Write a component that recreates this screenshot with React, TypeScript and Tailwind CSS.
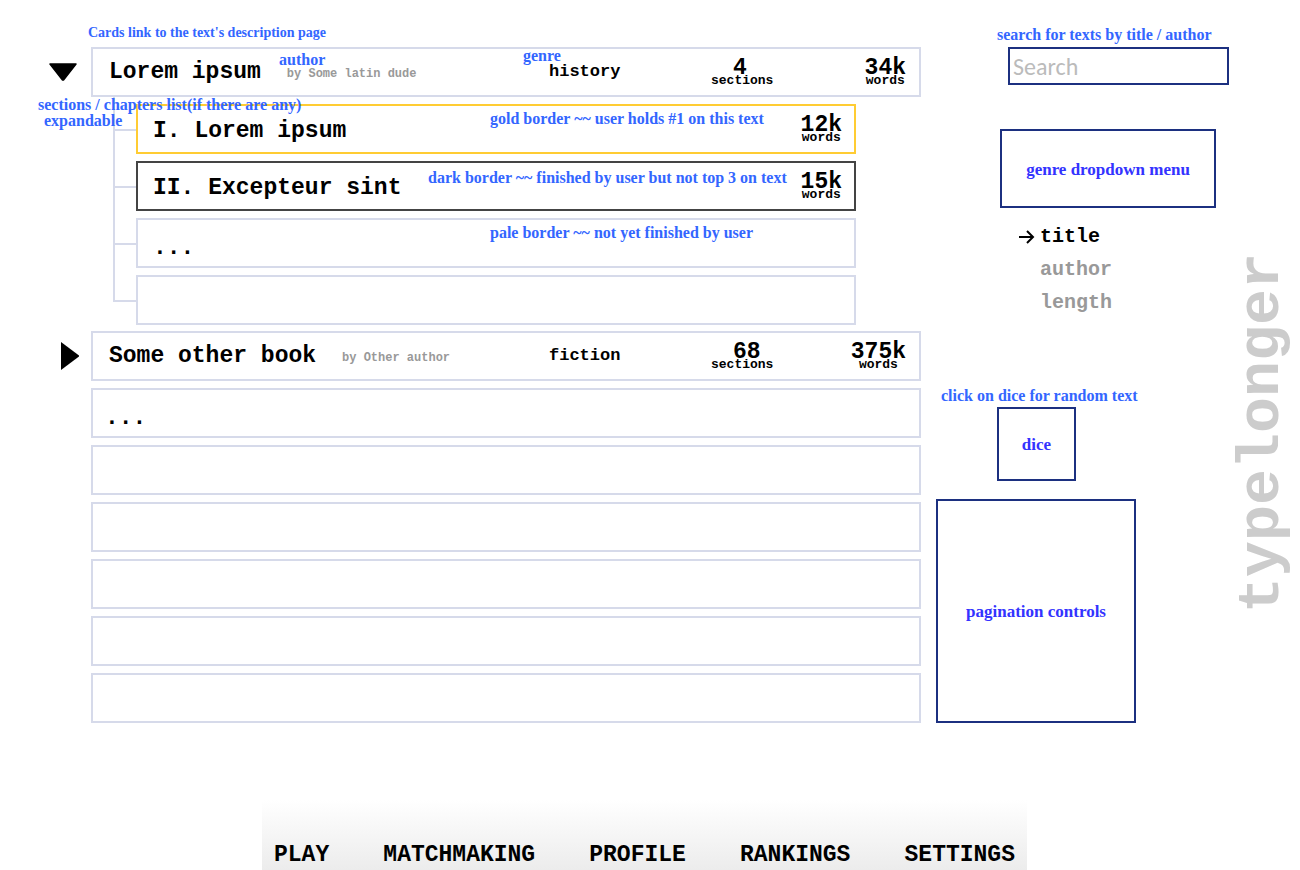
import { useState, type ReactNode } from "react";

type Status = "pale" | "gold" | "dark";

interface Section {
  title: string;
  words: string;
  status: Status;
  note?: ReactNode;
}

interface Book {
  title: string;
  author: string;
  genre: string;
  sectionCount: string;
  words: string;
  sections: Section[];
}

const borders: Record<Status, string> = {
  pale: "border-[#d6daea]",
  gold: "border-[#ffcc33]",
  dark: "border-[#444444]",
};

function Note({ place, children }: { place: string; children: ReactNode }) {
  return (
    <span
      className={`pointer-events-none absolute z-10 whitespace-nowrap font-['Liberation_Serif',serif] text-[16px] leading-4 font-bold text-[#3366ff] ${place}`}
    >
      {children}
    </span>
  );
}

function Words({ value }: { value: string }) {
  return (
    <span className="flex flex-col items-center">
      <span className="text-[23px] leading-[18px]">{value}</span>
      <span className="text-[13px] leading-2">words</span>
    </span>
  );
}

const sections: Section[] = [
  {
    title: "I. Lorem ipsum",
    words: "12k",
    status: "gold",
    note: <Note place="left-[377px] top-[14px]">gold border ~~ user holds #1 on this text</Note>,
  },
  {
    title: "II. Excepteur sint",
    words: "15k",
    status: "dark",
    note: (
      <Note place="left-[315px] top-4">
        dark border ~~ finished by user but not top 3 on text
      </Note>
    ),
  },
  {
    title: "...",
    words: "",
    status: "pale",
    note: <Note place="left-[377px] top-[14px]">pale border ~~ not yet finished by user</Note>,
  },
  { title: "", words: "", status: "pale" },
];

const books: Book[] = [
  {
    title: "Lorem ipsum",
    author: "by Some latin dude",
    genre: "history",
    sectionCount: "4",
    words: "34k",
    sections,
  },
  {
    title: "Some other book",
    author: "by Other author",
    genre: "fiction",
    sectionCount: "68",
    words: "375k",
    sections: [],
  },
];

const placeholders = ["...", "", "", "", "", ""];

function SectionRow({ section, last }: { section: Section; last: boolean }) {
  return (
    <li className="relative flex">
      <span className="flex w-[23px] flex-col">
        <span className="h-[34px] border-b-2 border-l-2 border-[#d6daea]" />
        {!last && <span className="flex-1 border-l-2 border-[#d6daea]" />}
      </span>
      <a
        href="#section"
        className={`mt-[7px] flex h-[50px] flex-1 items-center justify-between border-2 bg-white pr-3 pl-[15px] ${borders[section.status]}`}
      >
        <span className={`text-[23px] leading-6 ${section.title === "..." ? "pt-[10px]" : "pt-1"}`}>
          {section.title}
        </span>
        {section.words && <Words value={section.words} />}
      </a>
      {section.note}
    </li>
  );
}

function BookRow({ book, initiallyOpen }: { book: Book; initiallyOpen: boolean }) {
  const [open, setOpen] = useState(initiallyOpen);
  return (
    <li className="relative">
      <div className="flex">
        <button
          type="button"
          aria-label={`Toggle sections of ${book.title}`}
          aria-expanded={open}
          onClick={() => setOpen(!open)}
          className={`flex w-[42px] items-center ${open ? "" : "pl-3"}`}
        >
          {open ? (
            <svg width="28" height="18" viewBox="0 0 28 18" aria-hidden="true">
              <path d="M1 1H27L14.5 17H13.5Z" stroke="#000" strokeWidth="1.5" strokeLinejoin="round" />
            </svg>
          ) : (
            <svg width="18" height="28" viewBox="0 0 18 28" aria-hidden="true">
              <path d="M0 0V28L18 14.5V13.5Z" />
            </svg>
          )}
        </button>
        <a
          href="#text"
          className="flex h-[50px] flex-1 items-center border-2 border-[#d6daea] bg-white pr-[13px] pl-4"
        >
          <span className="flex flex-1 items-center gap-[26px]">
            <span className="text-[23px] leading-6">{book.title}</span>
            <span className="pt-1 text-[12px] text-[#999999]">{book.author}</span>
          </span>
          <span className="w-[162px] text-[17px]">{book.genre}</span>
          <span className="flex w-16 flex-col">
            <span className="pl-[22px] text-[23px] leading-[18px]">{book.sectionCount}</span>
            <span className="text-[13px] leading-2">sections</span>
          </span>
          <span className="flex w-[131px] justify-end">
            <Words value={book.words} />
          </span>
        </a>
      </div>
      {open && book.sections.length > 0 && (
        <ul className="mr-[65px] -mb-px ml-16">
          {book.sections.map((section, i) => (
            <SectionRow key={i} section={section} last={i === book.sections.length - 1} />
          ))}
        </ul>
      )}
      {initiallyOpen && (
        <>
          <Note place="left-[230px] top-[5px]">author</Note>
          <Note place="left-[474px] top-px">genre</Note>
          <Note place="left-[-11px] top-[50px]">
            sections / chapters list(if there are any)
            <br />
            <span className="pl-[6px]">expandable</span>
          </Note>
        </>
      )}
    </li>
  );
}

const sortKeys = ["title", "author", "length"];
const navItems = ["PLAY", "MATCHMAKING", "PROFILE", "RANKINGS", "SETTINGS"];

export default function App() {
  const [sort, setSort] = useState("title");
  return (
    <div className="flex min-h-screen flex-col bg-white font-['Liberation_Mono',monospace] font-bold text-black">
      <div className="flex pb-[77px]">
        <main className="min-w-0 flex-1 pt-[25px] pl-[49px]">
          <p className="mb-[6px] pl-[39px] font-['Liberation_Serif',serif] text-[14px] leading-4 text-[#3366ff]">
            Cards link to the text's description page
          </p>
          <ul className="flex flex-col gap-[7px]">
            {books.map((book, i) => (
              <BookRow key={book.title} book={book} initiallyOpen={i === 0} />
            ))}
            {placeholders.map((label, i) => (
              <li key={i} className="flex pl-[42px]">
                <a
                  href="#text"
                  className="flex h-[50px] flex-1 items-center border-2 border-[#d6daea] bg-white pt-[10px] pl-3 text-[23px] leading-6"
                >
                  {label}
                </a>
              </li>
            ))}
          </ul>
        </main>

        <aside className="flex w-[314px] flex-col pt-[27px] pl-[15px] font-['Liberation_Serif',serif] text-[16px] leading-4">
          <label htmlFor="search" className="ml-[61px] whitespace-nowrap text-[#3366ff]">
            search for texts by title / author
          </label>
          <input
            id="search"
            type="search"
            placeholder="Search"
            className="mt-1 ml-[72px] h-[38px] w-[221px] border-2 border-[#1c3080] px-[3px] font-[Carlito,Lato,sans-serif] text-[24px] leading-7 font-normal outline-none placeholder:text-[#bbbbbb]"
          />
          <select
            aria-label="Genre"
            className="mt-11 ml-16 h-[79px] w-[216px] appearance-none border-2 border-[#1c3080] bg-white pt-[2px] text-center text-[17px] leading-6 text-[#3333ff] [text-align-last:center]"
          >
            <option>genre dropdown menu</option>
          </select>
          <ul className="mt-3 ml-[82px] font-['Liberation_Mono',monospace] text-[20px] leading-[33px]">
            {sortKeys.map((key) => (
              <li key={key}>
                <button
                  type="button"
                  onClick={() => setSort(key)}
                  className={`flex items-center ${key === sort ? "text-black" : "text-[#999999]"}`}
                >
                  <span className="w-[22px]">
                    {key === sort && (
                      <svg width="17" height="16" viewBox="0 0 17 16" fill="none" aria-hidden="true">
                        <path d="M1 8H15M9 2L15 8L9 14" stroke="#000" strokeWidth="2" />
                      </svg>
                    )}
                  </span>
                  {key}
                </button>
              </li>
            ))}
          </ul>
          <p className="mt-[69px] ml-[5px] text-[#3366ff]">click on dice for random text</p>
          <button
            type="button"
            className="mt-[3px] ml-[61px] h-[74px] w-[79px] border-2 border-[#1c3080] pt-[2px] text-[17px] text-[#3333ff]"
          >
            dice
          </button>
          <section className="mt-[18px] flex h-56 w-[200px] items-center justify-center border-2 border-[#1c3080] pt-[2px] text-[17px] text-[#3333ff]">
            pagination controls
          </section>
        </aside>

        <div className="flex w-[65px] items-center justify-start pt-[143px]">
          <h1 className="rotate-180 text-[60px] leading-[54px] text-[#cccccc] [writing-mode:vertical-rl]">
            typelonger
          </h1>
        </div>
      </div>

      <nav className="mt-auto mr-[273px] ml-[262px] flex h-[70px] items-end justify-between bg-linear-to-b from-white to-[#ececec] px-3 pb-[3px] text-[23px] leading-6">
        {navItems.map((item) => (
          <a key={item} href={`#${item.toLowerCase()}`}>
            {item}
          </a>
        ))}
      </nav>
    </div>
  );
}
